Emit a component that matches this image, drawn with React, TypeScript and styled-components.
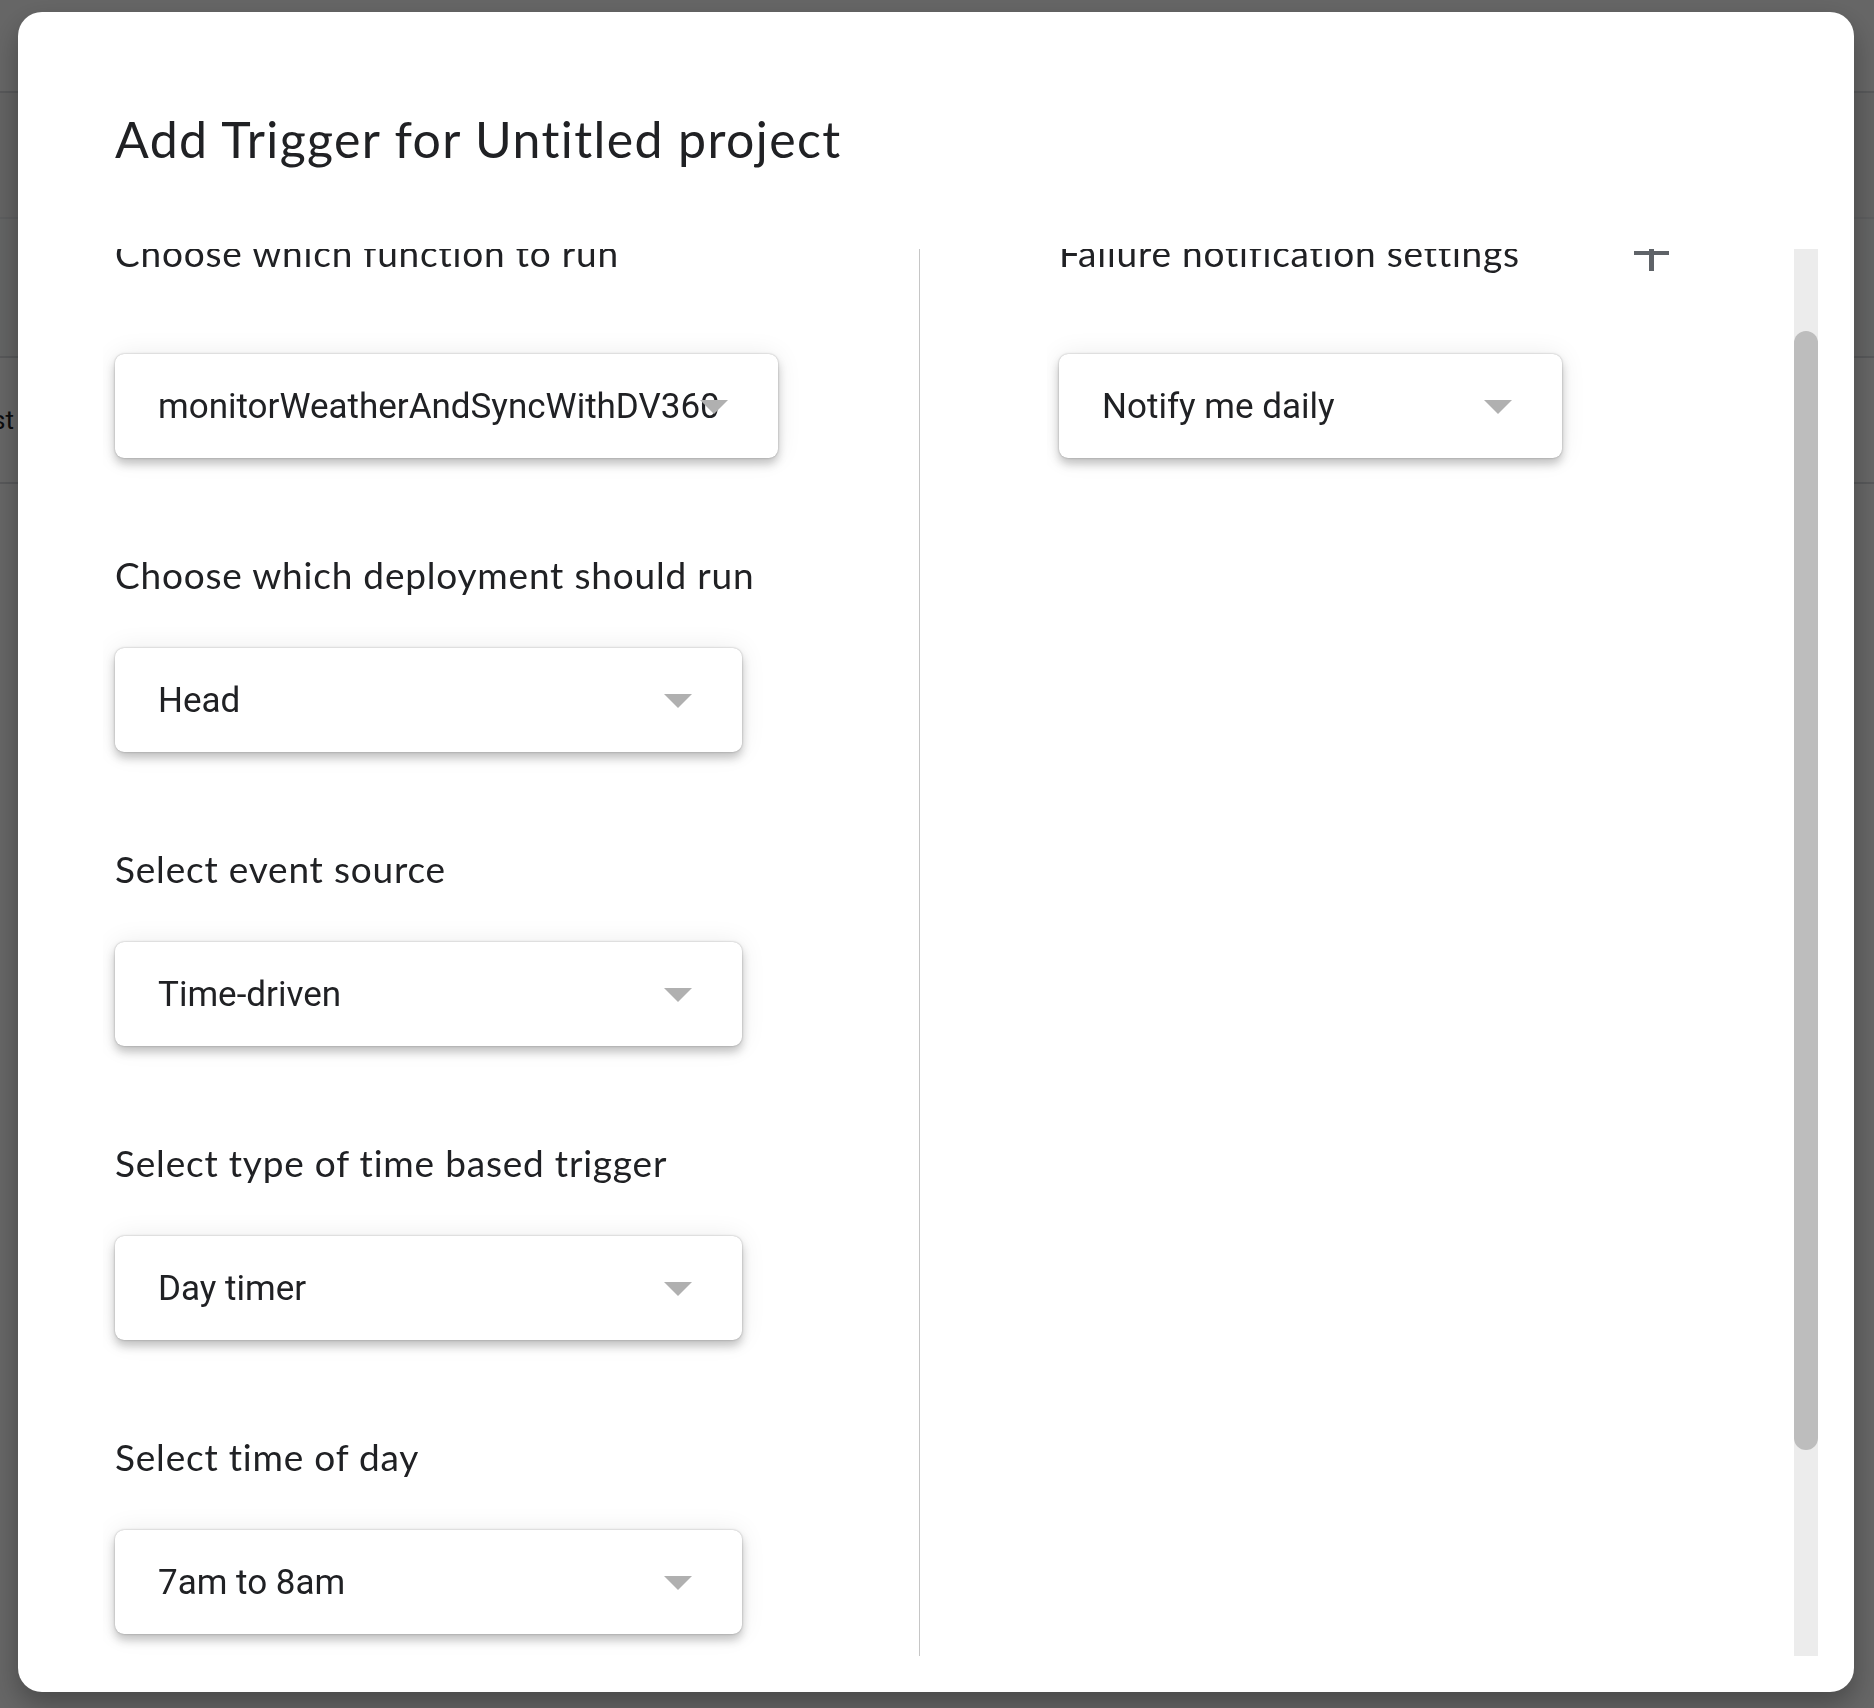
import React, { useLayoutEffect, useRef, useState } from "react";
import styled, { createGlobalStyle } from "styled-components";

const GlobalStyle = createGlobalStyle`
    html, body {
        margin: 0;
        padding: 0;
    }
    body {
        width: 1874px;
        height: 1708px;
        overflow: hidden;
        font-family: Roboto, "Liberation Sans", sans-serif;
    }
    * {
        box-sizing: border-box;
    }
`;

type SelectProps = {
    value: string;
    width: number;
};

const Select: React.FC<SelectProps> = ({ value, width }) => {
    return (
        <SelectClip>
            <SelectBox $width={width}>
                <SelectValue>{value}</SelectValue>
                <Arrow />
            </SelectBox>
        </SelectClip>
    );
};

const PlusIcon: React.FC = () => (
    <svg width="35" height="36" viewBox="0 0 35 36">
        <rect x="0" y="16" width="35" height="4" fill="#5f6368" />
        <rect x="15" y="0" width="5" height="36" fill="#5f6368" />
    </svg>
);

const App: React.FC = () => {
    const viewRef = useRef<HTMLDivElement>(null);
    const [thumb, setThumb] = useState({ height: 0, top: 0 });

    useLayoutEffect(() => {
        const v = viewRef.current;
        if (!v) return;
        v.scrollTop = 103;
        const ch = v.clientHeight;
        const sh = v.scrollHeight;
        const h = (ch * ch) / sh;
        const top = sh > ch ? (v.scrollTop * (ch - h)) / (sh - ch) : 0;
        setThumb({ height: h, top });
    }, []);

    return (
        <>
            <GlobalStyle />
            <Backdrop>
                <PageHeader />
                <PageToolbar />
                <PageRow $shade />
                <PageRow>
                    <RowText>Test</RowText>
                </PageRow>
            </Backdrop>
            <Overlay>
                <Dialog>
                    <Title>Add Trigger for Untitled project</Title>
                    <ScrollArea>
                        <Viewport ref={viewRef}>
                            <Columns>
                                <LeftColumn>
                                    <Field $first>
                                        <Label>Choose which function to run</Label>
                                        <Select width={663} value="monitorWeatherAndSyncWithDV360" />
                                    </Field>
                                    <Field>
                                        <Label>Choose which deployment should run</Label>
                                        <Select width={627} value="Head" />
                                    </Field>
                                    <Field>
                                        <Label>Select event source</Label>
                                        <Select width={627} value="Time-driven" />
                                    </Field>
                                    <Field>
                                        <Label>Select type of time based trigger</Label>
                                        <Select width={627} value="Day timer" />
                                    </Field>
                                    <Field>
                                        <Label>Select time of day</Label>
                                        <Select width={627} value="7am to 8am" />
                                    </Field>
                                </LeftColumn>
                                <RightColumn>
                                    <Field $first>
                                        <HeaderRow>
                                            <Label>Failure notification settings</Label>
                                            <PlusIcon />
                                        </HeaderRow>
                                        <Select width={503} value="Notify me daily" />
                                    </Field>
                                </RightColumn>
                            </Columns>
                        </Viewport>
                        <Track>
                            <Thumb style={{ height: thumb.height, marginTop: thumb.top }} />
                        </Track>
                    </ScrollArea>
                </Dialog>
            </Overlay>
        </>
    );
};

// Styled Components

const Backdrop = styled.div`
    display: flex;
    flex-direction: column;
    width: 1874px;
    height: 1708px;
    background-color: #ffffff;
`;

const PageHeader = styled.div`
    height: 93px;
    border-bottom: 2px solid #dadce0;
`;

const PageToolbar = styled.div`
    height: 126px;
    border-bottom: 2px solid #e8eaed;
    background-color: #f6f6f6;
`;

const PageRow = styled.div<{ $shade?: boolean }>`
    display: flex;
    align-items: center;
    height: ${(p) => (p.$shade ? 139 : 126)}px;
    border-bottom: 2px solid #dadce0;
    background-color: ${(p) => (p.$shade ? "#f8f9fa" : "#ffffff")};
    overflow: hidden;
`;

const RowText = styled.span`
    margin-left: -36px;
    font-size: 26px;
    color: #202124;
`;

const Overlay = styled.div`
    position: fixed;
    inset: 0;
    display: flex;
    padding: 12px 20px 16px 18px;
    background-color: rgba(0, 0, 0, 0.6);
`;

const Dialog = styled.div`
    display: flex;
    flex-direction: column;
    width: 1836px;
    height: 1680px;
    padding: 98px 36px 36px 0;
    border-radius: 24px;
    background-color: #ffffff;
    box-shadow: 0 12px 28px rgba(0, 0, 0, 0.3);
`;

const Title = styled.h1`
    margin: 0 0 80px 0;
    padding-left: 97px;
    font-family: Lato, "Open Sans", sans-serif;
    font-size: 50px;
    font-weight: 400;
    letter-spacing: 1.4px;
    line-height: 59px;
    color: #202124;
`;

const ScrollArea = styled.div`
    display: flex;
    flex: 1;
    min-height: 0;
`;

const Viewport = styled.div`
    flex: 1;
    overflow: hidden;
`;

const Track = styled.div`
    display: flex;
    flex-direction: column;
    width: 24px;
    background-color: #ececec;
`;

const Thumb = styled.div`
    width: 24px;
    border-radius: 12px;
    background-color: #bdbdbd;
`;

const Columns = styled.div`
    display: flex;
    align-items: stretch;
`;

const LeftColumn = styled.div`
    display: flex;
    flex-direction: column;
    gap: 93px;
    width: 902px;
    padding: 83px 0 281px 97px;
    border-right: 1px solid #c6c6c6;
`;

const RightColumn = styled.div`
    display: flex;
    flex-direction: column;
    flex: 1;
    padding: 83px 0 0 139px;
`;

const Field = styled.div<{ $first?: boolean }>`
    display: flex;
    flex-direction: column;
    gap: ${(p) => (p.$first ? 77 : 49)}px;
`;

const HeaderRow = styled.div`
    display: flex;
    align-items: center;
    justify-content: space-between;
    width: 610px;
`;

const Label = styled.div`
    font-family: Lato, "Open Sans", sans-serif;
    font-size: 37px;
    letter-spacing: 0.8px;
    line-height: 48px;
    color: #202124;
    white-space: nowrap;
`;

const SelectClip = styled.div`
    align-self: flex-start;
    overflow: hidden;
    padding: 28px 28px 36px 12px;
    margin: -28px -28px -36px -12px;
`;

const SelectBox = styled.div<{ $width: number }>`
    position: relative;
    display: flex;
    align-items: center;
    width: ${(p) => p.$width}px;
    height: 104px;
    padding-left: 43px;
    border-radius: 9px;
    background-color: #ffffff;
    box-shadow: 0 0 2px rgba(0, 0, 0, 0.3), 0 6px 10px rgba(0, 0, 0, 0.22),
        0 0 26px rgba(0, 0, 0, 0.08);
`;

const SelectValue = styled.span`
    font-family: Roboto, "Liberation Sans", sans-serif;
    font-size: 35px;
    color: #202124;
    white-space: nowrap;
`;

const Arrow = styled.span`
    position: absolute;
    right: 50px;
    top: 50%;
    margin-top: -6px;
    width: 0;
    height: 0;
    border-left: 14px solid transparent;
    border-right: 14px solid transparent;
    border-top: 14px solid #b0b0b0;
`;

export default App;
